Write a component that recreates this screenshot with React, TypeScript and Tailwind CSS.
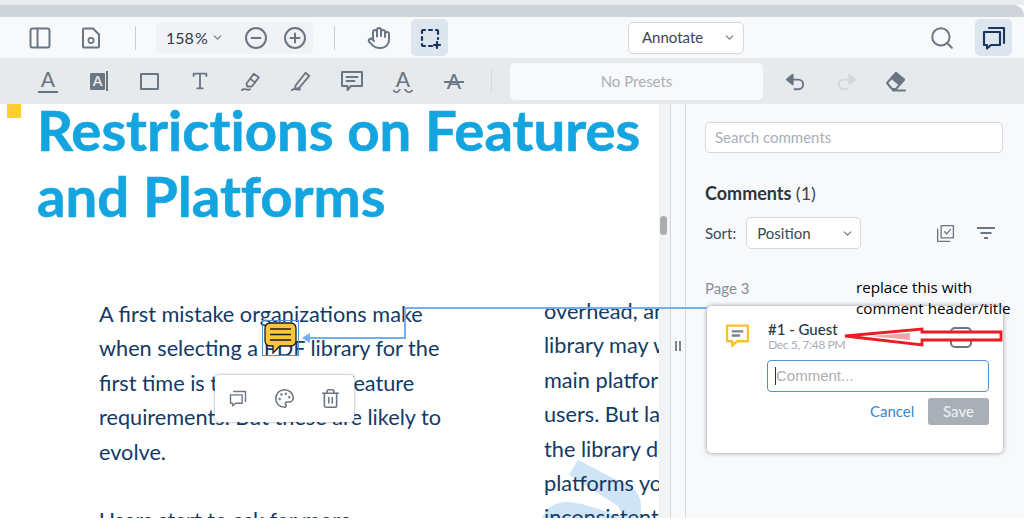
import React from 'react'
import { ChevronDown, Search, Hand, Trash2, Palette } from 'lucide-react'

const ink = '#6b7683'

function Svg({ size = 24, color = ink, sw = 2, children }: { size?: number; color?: string; sw?: number; children: React.ReactNode }) {
  return (
    <svg width={size} height={size} viewBox="0 0 24 24" fill="none" stroke={color} strokeWidth={sw} strokeLinecap="round" strokeLinejoin="round">
      {children}
    </svg>
  )
}

function TopBar() {
  return (
    <div className="flex h-[41px] items-center bg-[#f8f9fb]">
      <div className="ml-[28px] flex w-[24px] justify-center">
        <Svg><rect x="2.5" y="2.5" width="19" height="19" rx="2" /><path d="M9.5 2.5v19" /></Svg>
      </div>
      <div className="ml-[27px] flex w-[24px] justify-center">
        <Svg>
          <path d="M5 2.500h9l6 6v12a1 1 0 0 1-1 1H5a1 1 0 0 1-1-1v-17a1 1 0 0 1 1-1z" />
          <circle cx="12" cy="14.500" r="2.600" strokeWidth="1.700" />
        </Svg>
      </div>
      <div className="ml-[32px] h-[24px] w-[1px] bg-[#c9ced4]" />
      <div className="ml-[20px] flex h-[32px] w-[157px] items-center rounded-[5px] bg-[#f0f2f5]">
        <span className="ml-[10px] text-[16px] text-[#2d3a47] [word-spacing:-3px]">158 %</span>
        <ChevronDown size={13} color={ink} className="ml-[3px]" />
        <div className="ml-[20px]"><Svg><circle cx="12" cy="12" r="10" /><path d="M7.500 12h9" /></Svg></div>
        <div className="ml-[15px]"><Svg><circle cx="12" cy="12" r="10" /><path d="M7.500 12h9M12 7.500v9" /></Svg></div>
      </div>
      <div className="ml-[21px] h-[24px] w-[1px] bg-[#c9ced4]" />
      <div className="ml-[32px]"><Hand size={24} color={ink} strokeWidth={2} /></div>
      <div className="ml-[20px] flex h-[37px] w-[37px] items-center justify-center rounded-[5px] bg-[#dde5ee]">
        <Svg color="#17375e" sw={2.200}>
          <path d="M4 7V5a1 1 0 0 1 1-1h2M11 4h3M18 4h1a1 1 0 0 1 1 1v3M20 12v1M4 11v3M4 18v1a1 1 0 0 0 1 1h2M11 20h3M19 16v6M16 19h6" />
        </Svg>
      </div>
      <div className="ml-[180px] flex h-[32px] w-[116px] items-center justify-between rounded-[5px] border border-[#d5d9de] bg-white pl-[13px] pr-[7px]">
        <span className="text-[15px] text-[#3a4652]">Annotate</span>
        <ChevronDown size={13} color={ink} />
      </div>
      <div className="ml-auto mr-[20px]"><Search size={26} color={ink} strokeWidth={1.800} /></div>
      <div className="mr-[12px] flex h-[37px] w-[37px] items-center justify-center rounded-[5px] bg-[#dde5ee]">
        <Svg color="#17375e" sw={2.100}>
          <path d="M7 2h15v15" />
          <path d="M2 6h16v13H9l-4 3.500V19H2z" />
        </Svg>
      </div>
    </div>
  )
}

function ToolBar() {
  return (
    <div className="flex h-[46px] items-center bg-[#e7eaed]">
      <div className="ml-[38px] flex w-[20px] flex-col items-center">
        <span className="text-[21px] font-[500] leading-[20px] text-[#6b7683]">A</span>
        <div className="mt-[2px] h-[2px] w-[20px] bg-[#6b7683]" />
      </div>
      <div className="ml-[32px] flex items-center">
        <div className="flex h-[17px] w-[15px] items-center justify-center rounded-[1px] bg-[#6b7683] text-[14px] font-bold leading-none text-[#e7eaed]">A</div>
        <div className="ml-[1px] h-[20px] w-[2px] bg-[#6b7683]" />
      </div>
      <div className="ml-[32px] h-[17px] w-[19px] rounded-[1px] border-2 border-[#6b7683]" />
      <div className="ml-[30px]">
        <Svg size={22}><path d="M5 6.500V4h14v2.500M12 4v16M9 20h6" /></Svg>
      </div>
      <div className="ml-[29px]">
        <Svg size={22}><path d="M2 22c3-3 6 1 9-1" /><path d="M7 15L15 4l5.500 4L13 18H8z" /><path d="M11 9.500l5.500 4" /></Svg>
      </div>
      <div className="ml-[28px]">
        <Svg size={22}><path d="M2 22c3-3 6 1 9-1" /><path d="M6 17L17 3l4 3.500L10 19.500l-4.500 1z" /></Svg>
      </div>
      <div className="ml-[28px]">
        <Svg size={24}><path d="M2 3h20v14H11l-3.500 4V17H2z" /><path d="M6.500 8h11M6.500 12h8" /></Svg>
      </div>
      <div className="ml-[29px] flex w-[20px] flex-col items-center">
        <span className="text-[21px] font-[500] leading-[20px] text-[#6b7683]">A</span>
        <svg width="20" height="4" viewBox="0 0 20 4" fill="none" stroke="#6b7683" strokeWidth="1.600"><path d="M0 1c2.500 3 5 3 6.500 0s4-3 6 0 5 3 7 0" /></svg>
      </div>
      <div className="relative ml-[31px] flex w-[20px] justify-center">
        <span className="text-[21px] font-[500] leading-[20px] text-[#6b7683]">A</span>
        <div className="absolute left-0 top-[10px] h-[2px] w-[20px] bg-[#6b7683]" />
      </div>
      <div className="ml-[27px] h-[24px] w-[1px] bg-[#d5d9de]" />
      <div className="ml-[18px] flex h-[37px] w-[253px] items-center justify-center rounded-[5px] bg-[#f8f9fb] text-[15px] text-[#a8afb7]">No Presets</div>
      <div className="ml-[21px]">
        <Svg size={23}><path d="M9 5L3 10l6 5z" fill={ink} /><path d="M6 10h9a5 5 0 0 1 0 10h-4" /></Svg>
      </div>
      <div className="ml-[28px]">
        <Svg size={23} color="#d3d7dc"><path d="M15 5l6 5-6 5z" fill="#d3d7dc" /><path d="M18 10H9a5 5 0 0 0 0 10h4" /></Svg>
      </div>
      <div className="ml-[26px]">
        <svg width="24" height="24" viewBox="0 0 24 24" fill="none" stroke={ink} strokeWidth="2" strokeLinejoin="round" strokeLinecap="round">
          <path d="M3 14l9-10 8 6.500-8 9.500H8z" />
          <path d="M12 4l8 6.500-4.500 5-8-6.500z" fill={ink} />
          <path d="M9 21.500h12" />
        </svg>
      </div>
    </div>
  )
}

function DocPage() {
  const left = ['A first mistake organizations make', 'when selecting a PDF library for the', 'first time is to look at just feature', 'requirements. But these are likely to', 'evolve.']
  const right = ['overhead, and', 'library may work', 'main platform', 'users. But later', 'the library does', 'platforms you', 'inconsistent']
  return (
    <div className="relative h-[414px] w-[659px] shrink-0 overflow-hidden bg-white">
      <svg className="absolute left-[500px] top-[350px]" width="159" height="64" viewBox="0 0 159 64" fill="#cfe4f5">
        <path d="M78 6 L69 21 L118 52 L124 64 L141 64 L141 50 C140 40 134 34 126 31 Z" />
        <path d="M42 64 C48 50 62 46 76 49 C92 52 108 58 124 64 Z" />
      </svg>
      <div className="absolute left-[7px] top-0 h-[14px] w-[14px] bg-[#ffcd36]" />
      <h1 className="mt-[-8px] pl-[37px] text-[56.300px] font-bold leading-[66px] text-[#14a5e0] [font-variant-ligatures:none] [-webkit-text-stroke:0.6px_#14a5e0]">
        Restrictions on Features<br />and Platforms
      </h1>
      <div className="relative mt-[69px] flex">
        <div className="ml-[99px] w-[390px] shrink-0 text-[21.700px] leading-[34.400px] text-[#123a66]">
          {left.map(l => <div key={l} className="whitespace-nowrap">{l}</div>)}
          <div className="mt-[34px] whitespace-nowrap">Users start to ask for more</div>
        </div>
        <div className="ml-[55px] mt-[-3px] w-[200px] shrink-0 text-[21.700px] leading-[34.400px] text-[#123a66]">
          {right.map(l => <div key={l} className="whitespace-nowrap">{l}</div>)}
        </div>
      </div>
    </div>
  )
}

function CommentCard() {
  return (
    <div className="relative h-[147px] w-[296px] rounded-[5px] bg-white shadow-[0_0_5px_rgba(60,70,85,0.55)]">
      <div className="absolute left-[18px] top-[17px]">
        <svg width="25" height="25" viewBox="0 0 24 24" fill="none" stroke="#fbc02d" strokeWidth="2.200" strokeLinejoin="round">
          <path d="M2 2.500h20v15H11.500L7 22v-4.500H2z" />
          <path d="M6.500 8h11M6.500 12h8" stroke="#7a838e" />
        </svg>
      </div>
      <div className="absolute left-[61px] top-[13px] text-[15px] font-medium leading-[20px] text-[#2c3640]">#1 - Guest</div>
      <div className="absolute left-[61px] top-[31px] text-[12.300px] leading-[16px] tracking-[-0.5px] text-[#a8afb7]">Dec 5, 7:48 PM</div>
      <div className="absolute left-[243px] top-[21px] flex h-[21px] w-[22px] items-center justify-center rounded-[5px] border-2 border-[#6b7683]">
        <div className="h-[2px] w-[9px] bg-[#6b7683]" />
      </div>
      <div className="absolute left-[60px] top-[54px] flex h-[32px] w-[222px] items-center rounded-[4px] border border-[#4a94d6] pl-[7px] font-['Liberation_Sans',sans-serif] text-[15px] text-[#a8afb7]">
        <div className="h-[18px] w-[1px] bg-[#2c3640]" />
        Comment...
      </div>
      <div className="absolute left-[163px] top-[96px] text-[15px] leading-[18px] text-[#3a85c9]">Cancel</div>
      <div className="absolute left-[221px] top-[92px] flex h-[27px] w-[61px] items-center justify-center rounded-[3px] bg-[#a8afb7] text-[15px] font-medium text-[#eef0f2]">Save</div>
    </div>
  )
}

function Panel() {
  return (
    <div className="flex h-[414px] flex-1 flex-col bg-[#f8f9fb] pl-[19px]">
      <div className="mt-[18px] flex h-[31px] w-[298px] items-center rounded-[5px] border border-[#d5d9de] bg-white pl-[9px] text-[15px] text-[#a8afb7]">Search comments</div>
      <div className="mt-[28px] text-[18px] font-bold leading-[24px] text-[#2c3640]">Comments <span className="font-normal text-[#3a4652]">(1)</span></div>
      <div className="mt-[12px] flex items-center">
        <span className="text-[15px] text-[#3a4652]">Sort:</span>
        <div className="ml-[10px] flex h-[32px] w-[115px] items-center justify-between rounded-[5px] border border-[#d5d9de] bg-white pl-[10px] pr-[6px]">
          <span className="text-[15px] text-[#3a4652]">Position</span>
          <ChevronDown size={13} color={ink} />
        </div>
        <div className="ml-[74px]">
          <Svg size={21} sw={1.500}>
            <path d="M7 3h14v14H7z" /><path d="M3 7v14h14" /><path d="M11 10l2.500 2.500 4-5" />
          </Svg>
        </div>
        <div className="ml-[20px]">
          <svg width="20" height="14" viewBox="0 0 20 14" fill="none" stroke={ink} strokeWidth="2">
            <path d="M1 2h18M4.500 7h11M8 12h4" />
          </svg>
        </div>
      </div>
      <div className="mt-[29px] text-[15px] leading-[20px] text-[#868e97]">Page 3</div>
      <div className="ml-[2px] mt-[8px]"><CommentCard /></div>
    </div>
  )
}

export default function App() {
  return (
    <div className="relative h-[531px] w-[1024px] overflow-hidden bg-white font-['Lato',sans-serif]">
      <div className="h-[5px] bg-[#e9ecef]" />
      <div className="h-[12px] rounded-tr-[10px] bg-[#cfd3da]" />
      <TopBar />
      <ToolBar />
      <div className="flex">
        <DocPage />
        <div className="h-[414px] w-[11px] shrink-0 bg-[#f1f3f5]">
          <div className="ml-[1px] mt-[112px] h-[19px] w-[7px] rounded-full bg-[#a9adb2]" />
        </div>
        <div className="flex h-[414px] w-[16px] shrink-0 items-center justify-center border-x border-[#d5d9de] bg-[#f8f9fb]">
          <div className="mb-[-70px] flex gap-[2px]">
            <div className="h-[10px] w-[2px] bg-[#7a838e]" />
            <div className="h-[10px] w-[2px] bg-[#7a838e]" />
          </div>
        </div>
        <Panel />
      </div>

      {/* note anchor and its link to the card */}
      <div className="absolute left-[262px] top-[320px] h-[36px] w-[37px] border border-[#4a94d6]" />
      <svg className="absolute left-[264px] top-[322px]" width="33" height="32" viewBox="0 0 33 32">
        <path d="M6 1h21a5 5 0 0 1 5 5v13a5 5 0 0 1-5 5H16l-7 7v-7H6a5 5 0 0 1-5-5V6a5 5 0 0 1 5-5z" fill="#fcc63a" stroke="#1c1c1c" strokeWidth="1.300" />
        <path d="M6 7h21M6 12.500h21M6 18h21" stroke="#1c1c1c" strokeWidth="1.500" />
      </svg>
      <svg className="absolute left-[300px] top-[300px]" width="410" height="46" viewBox="0 0 410 46" fill="none" stroke="#76aeec" strokeWidth="2">
        <path d="M407 8H105V38H10" />
        <path d="M2 38l8-5v10z" fill="#76aeec" stroke="none" />
      </svg>

      {/* hover toolbar over the page text */}
      <div className="absolute left-[215px] top-[375px] flex h-[47px] w-[139px] items-center rounded-[4px] bg-white shadow-[0_0_3px_rgba(60,70,85,0.55)]">
        <div className="ml-[13px]">
          <Svg size={20} sw={1.700}><path d="M7 3h14v12" /><path d="M3 7h14v10H9l-3.500 3v-3H3z" /></Svg>
        </div>
        <div className="ml-[26px]"><Palette size={21} color={ink} strokeWidth={1.800} /></div>
        <div className="ml-[25px]"><Trash2 size={21} color={ink} strokeWidth={1.800} /></div>
      </div>

      {/* hand drawn note pasted over the card */}
      <svg className="absolute left-[840px] top-[326px]" width="164" height="24" viewBox="0 0 164 24" stroke="#ea1c24" strokeWidth="2.800">
        <path d="M5 10L82 3V6H161V14H82V19z" fill="#fff" />
        <path d="M30 10L70 7V14z" fill="#f3a5a9" stroke="none" />
      </svg>
      <div className="absolute left-[856px] top-[277px] font-['Open_Sans',sans-serif] text-[15.200px] leading-[21px] text-black">
        replace this with<br />comment header/title
      </div>
    </div>
  )
}
